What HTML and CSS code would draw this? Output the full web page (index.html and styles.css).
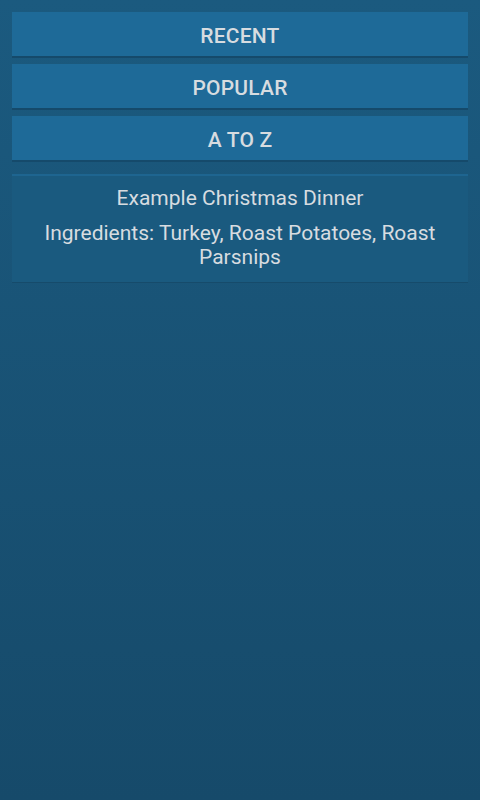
FILE: index.html
```html
<!DOCTYPE html>
<html lang="en">
<head>
<meta charset="UTF-8">
<meta name="viewport" content="width=device-width, initial-scale=1.0">
<title>Recipes</title>
<link rel="stylesheet" href="styles.css">
</head>
<body>

<div class="menu">
    <button class="menu-button">RECENT</button>
    <button class="menu-button">POPULAR</button>
    <button class="menu-button">A TO Z</button>
</div>

<div class="recipe-list">
    <div class="recipe">
        <p class="recipe-title">Example Christmas Dinner</p>
        <p class="recipe-ingredients">Ingredients: Turkey, Roast Potatoes, Roast Parsnips</p>
    </div>
</div>

</body>
</html>
```

FILE: styles.css
```css
html {
    height: 100%;
}

body {
    margin: 0;
    min-height: 100%;
    padding: 12px;
    box-sizing: border-box;
    background: linear-gradient(#1b5a7f, #164a6a);
    font-family: Roboto, "Liberation Sans", sans-serif;
    color: #d7dce0;
}

.menu {
    display: flex;
    flex-direction: column;
    gap: 8px;
}

.menu-button {
    height: 44px;
    padding: 4px 0 0;
    border: none;
    background-color: #1e6a98;
    box-shadow: 0 2px 0 #154a6b;
    color: #d7dce0;
    font-family: inherit;
    font-size: 21px;
    font-weight: 500;
    letter-spacing: 0.2px;
    cursor: pointer;
}

.recipe-list {
    margin-top: 14px;
}

.recipe {
    background-color: #1a5a7f;
    border-top: 2px solid #1e6590;
    border-bottom: 1px solid #164b6b;
    padding: 10px 16px 13px;
    text-align: center;
}

.recipe-title {
    margin: 0;
    font-size: 21px;
    line-height: 24px;
}

.recipe-ingredients {
    margin: 11px 0 0;
    font-size: 21px;
    line-height: 24px;
}
```
